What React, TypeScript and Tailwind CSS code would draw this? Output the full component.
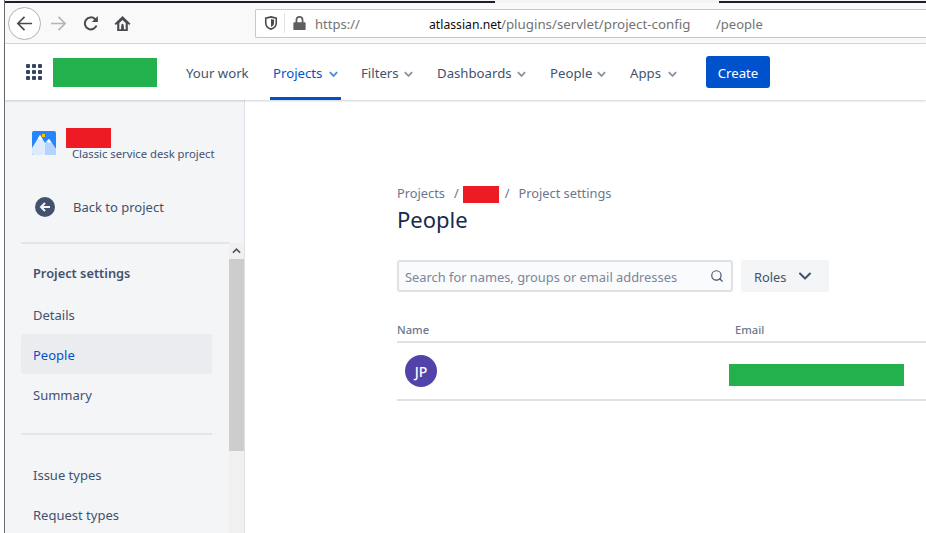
import { ChevronDown, Search } from "lucide-react";

const font = { fontFamily: '"Noto Sans", "Open Sans", sans-serif' };

const NavChevron = ({ blue }: { blue?: boolean }) => (
  <svg viewBox="0 0 12 8" className="ml-[6px] h-[8px] w-[11px]" fill="none">
    <path d="M2 2l4 4 4-4" stroke={blue ? "#4c8be0" : "#8993a4"} strokeWidth="2" />
  </svg>
);

const BrowserBar = () => (
  <div className="flex h-[40px] items-center bg-[#f9f9fa] border-b border-[#d9d9da] box-content">
    <div className="ml-[3px] flex h-[33px] w-[33px] items-center justify-center rounded-full border border-[#b1b1b3] bg-white">
      <svg viewBox="0 0 18 18" className="h-[17px] w-[17px]" fill="none" stroke="#4a4a4f" strokeWidth="1.8">
        <path d="M17 9H2M9 2L2 9l7 7" />
      </svg>
    </div>
    <svg viewBox="0 0 18 18" className="ml-[9px] h-[17px] w-[17px]" fill="none" stroke="#b5b5b7" strokeWidth="1.8">
      <path d="M1 9h15M9 2l7 7-7 7" />
    </svg>
    <svg viewBox="0 0 16 16" className="ml-[16px] h-[16px] w-[16px]" fill="none" stroke="#4a4a4f" strokeWidth="2">
      <path d="M13.5 10.5A6 6 0 1 1 12 4l2 2" />
      <path d="M14.8 1v6h-6" fill="#4a4a4f" stroke="none" />
    </svg>
    <svg viewBox="0 0 16 16" className="ml-[15px] h-[17px] w-[17px]" fill="none">
      <path d="M8 1L0.5 8.2l1.2 1.2L3 8.2V15h10V8.2l1.3 1.2 1.2-1.2z" fill="#4a4a4f" />
      <path d="M5 7.6L8 4.8l3 2.8V13.3H9.3v-2.6a1.3 1.3 0 1 0-2.6 0v2.6H5z" fill="#f9f9fa" />
      <circle cx="8" cy="9.2" r="1" fill="#4a4a4f" />
    </svg>
    <div className="ml-[124px] flex h-[29px] flex-1 items-center border border-r-0 border-[#c8c8c9] bg-white rounded-l-[2px]">
      <svg viewBox="0 0 16 16" className="ml-[8px] h-[14px] w-[14px]" fill="none">
        <path d="M8 1l6 1.5V8c0 3.5-2.5 6-6 7-3.5-1-6-3.5-6-7V2.500z" stroke="#4a4a4f" strokeWidth="1.800" />
        <path d="M8 3.500l3.500.9V8c0 2.200-1.500 3.800-3.500 4.500z" fill="#4a4a4f" />
      </svg>
      <div className="ml-[6px] h-[20px] w-px bg-[#e2e2e3]" />
      <svg viewBox="0 0 14 16" className="ml-[8px] h-[14px] w-[13px]">
        <path d="M7 0a4.500 4.500 0 0 0-4.500 4.500V7H1a1 1 0 0 0-1 1v7a1 1 0 0 0 1 1h12a1 1 0 0 0 1-1V8a1 1 0 0 0-1-1h-1.500V4.500A4.500 4.500 0 0 0 7 0zm0 2a2.500 2.500 0 0 1 2.500 2.500V7h-5V4.500A2.500 2.500 0 0 1 7 2z" fill="#5f5f62" />
      </svg>
      <div className="ml-[9px] flex items-baseline whitespace-nowrap pt-[3px] text-[13px] text-[#737373]">
        <span className="w-[114px]">https://</span>
        <span className="w-[72px] text-[12.200px] text-[#0c0c0d]">atlassian.net</span>
        <span className="w-[215px] text-[13.300px]">/plugins/servlet/project-config</span>
        <span>/people</span>
      </div>
    </div>
  </div>
);

const TopNav = () => (
  <div className="relative z-10 flex h-[56px] items-center bg-white text-[13.200px] text-[#42526e] shadow-[0_1px_2px_rgba(9,30,66,0.2)]">
    <div className="ml-[21px] grid h-[16px] w-[16px] grid-cols-3 gap-[2px]">
      {Array.from({ length: 9 }).map((_, i) => (
        <div key={i} className="rounded-[1px] bg-[#344563]" />
      ))}
    </div>
    <div className="ml-[11px] h-[29px] w-[104px] bg-[#23b14d]" />
    <span className="ml-[29px] w-[63px] whitespace-nowrap pt-[4px]">Your work</span>
    <div className="ml-[21px] flex h-full w-[71px] items-center border-b-[3px] border-[#0052cc] pl-[3px] pt-[6px] text-[#0052cc]">
      Projects
      <NavChevron blue />
    </div>
    <div className="ml-[20px] flex items-center pt-[4px]">
      <span className="w-[36px]">Filters</span>
      <NavChevron />
    </div>
    <div className="ml-[23px] flex items-center pt-[4px]">
      <span className="w-[73px]">Dashboards</span>
      <NavChevron />
    </div>
    <div className="ml-[23px] flex items-center pt-[4px]">
      <span className="w-[40px]">People</span>
      <NavChevron />
    </div>
    <div className="ml-[23px] flex items-center pt-[4px]">
      <span className="w-[31px]">Apps</span>
      <NavChevron />
    </div>
    <button className="ml-[28px] h-[32px] w-[64px] rounded-[3px] bg-[#0052cc] pt-[3px] text-white">Create</button>
  </div>
);

const Sidebar = () => (
  <div className="relative h-full w-[240px] shrink-0 overflow-hidden border-r border-[#dfe1e6] bg-[#f4f5f7] text-[13px] text-[#42526e]">
    <div className="flex h-[142px] flex-col pl-[27px]">
      <div className="mt-[28px] flex">
        <svg viewBox="0 0 24 24" className="mt-[3px] h-[24px] w-[24px] rounded-[2px]">
          <rect width="24" height="24" fill="#2684ff" />
          <path d="M0 17L8 4l5 8 4-4 7 10v6H0z" fill="#deebff" />
          <path d="M13 12l4-4 7 10v6H13z" fill="#b3d4ff" />
          <path d="M5.500 8L8 4l3 4.800-1.500-.8-1.500 1-1-1z" fill="#fff" />
          <path d="M15 10l2-2 2.800 4-1.300-.7-1.500.7-1-1z" fill="#fff" />
          <rect x="10" y="3" width="3" height="3" fill="#ffc400" />
        </svg>
        <div className="ml-[10px]">
          <div className="h-[20px] w-[45px] bg-[#ed1c24]" />
          <div className="ml-[6px] -mt-[1px] whitespace-nowrap text-[11.250px] leading-[13px]">Classic service desk project</div>
        </div>
      </div>
      <div className="mt-[36px] flex items-center pl-[3px]">
        <svg viewBox="0 0 20 20" className="h-[20px] w-[20px]">
          <circle cx="10" cy="10" r="10" fill="#42526e" />
          <path d="M15 10H6M10 6l-4 4 4 4" stroke="#f4f5f7" strokeWidth="2" fill="none" />
        </svg>
        <span className="ml-[18px] pt-[2px]">Back to project</span>
      </div>
    </div>
    <div className="ml-[16px] h-[2px] w-[208px] bg-[#e4e5ea]" />
    <div className="ml-[16px] w-[191px] pt-[19px]">
      <div className="pl-[12px] text-[12.800px] font-semibold leading-[20px] text-[#42526e]">Project settings</div>
      <div className="mt-[11px] flex h-[40px] items-center pl-[12px] pt-[4px]">Details</div>
      <div className="flex h-[40px] items-center rounded-[3px] bg-[#ebecf0] pl-[12px] pt-[4px] text-[#0052cc]">People</div>
      <div className="flex h-[40px] items-center pl-[12px] pt-[4px]">Summary</div>
      <div className="mt-[19px] h-[2px] bg-[#e4e5ea]" />
      <div className="mt-[20px] flex h-[40px] items-center pl-[12px] pt-[2px]">Issue types</div>
      <div className="flex h-[40px] items-center pl-[12px] pt-[2px]">Request types</div>
    </div>
    <div className="absolute right-0 top-[143px] flex h-[400px] w-[15px] flex-col bg-[#f0f0f0]">
      <div className="flex h-[16px] items-center justify-center">
        <svg viewBox="0 0 10 6" className="h-[6px] w-[9px]" fill="none">
          <path d="M1 5l4-4 4 4" stroke="#505050" strokeWidth="1.800" />
        </svg>
      </div>
      <div className="h-[192px] bg-[#cdcdcd]" />
    </div>
  </div>
);

const Content = () => (
  <div className="flex-1 pl-[152px] pt-[85px] text-[#42526e]">
    <div className="flex h-[18px] items-center text-[12.800px] text-[#6b778c]">
      <span>Projects</span>
      <span className="ml-[9px]">/</span>
      <div className="ml-[4px] h-[17px] w-[36px] bg-[#ed1c24]" />
      <span className="ml-[6px]">/</span>
      <span className="ml-[9px]">Project settings</span>
    </div>
    <h1 className="mt-[1px] text-[22px] leading-[30px] text-[#172b4d]">People</h1>
    <div className="mt-[26px] flex">
      <div className="flex h-[32px] w-[336px] items-center justify-between rounded-[3px] border-2 border-[#dfe1e6] bg-[#fafbfc] pl-[6px] pr-[7px]">
        <span className="pt-[4px] text-[12.850px] text-[#7a869a]">Search for names, groups or email addresses</span>
        <Search size={14} strokeWidth={2} color="#42526e" />
      </div>
      <div className="ml-[8px] flex h-[32px] w-[88px] items-center rounded-[3px] bg-[#f4f5f7] pl-[13px] text-[12.850px]">
        <span className="w-[31px] pt-[4px]">Roles</span>
        <ChevronDown size={20} strokeWidth={2.500} className="ml-[10px]" />
      </div>
    </div>
    <div className="mt-[27px] flex h-[22px] items-center border-b-2 border-[#dfe1e6] box-content text-[11.200px] font-medium text-[#6b778c]">
      <span className="w-[338px]">Name</span>
      <span>Email</span>
    </div>
    <div className="flex h-[56px] items-center border-b-2 border-[#dfe1e6] box-content">
      <div className="ml-[8px] flex h-[32px] w-[32px] items-center justify-center rounded-full bg-[#5243aa] text-[14px] font-medium text-white">
        JP
      </div>
      <div className="ml-[292px] mt-[8px] h-[22px] w-[175px] bg-[#23b14d]" />
    </div>
  </div>
);

export default function App() {
  return (
    <div className="h-[533px] w-[926px] overflow-hidden bg-white pl-[4px]" style={font}>
      <div className="flex h-full flex-col border-l border-[#6b6b6b]">
        <div className="flex h-[3px] shrink-0 items-start bg-[#f4f4f4]">
          <div className="mt-[1px] h-[2px] w-[490px] bg-[#1c1c33]" />
          <div className="ml-[224px] mt-[1px] h-[2px] flex-1 bg-[#1c1c33]" />
        </div>
        <BrowserBar />
        <TopNav />
        <div className="flex min-h-0 flex-1">
          <Sidebar />
          <Content />
        </div>
      </div>
    </div>
  );
}
